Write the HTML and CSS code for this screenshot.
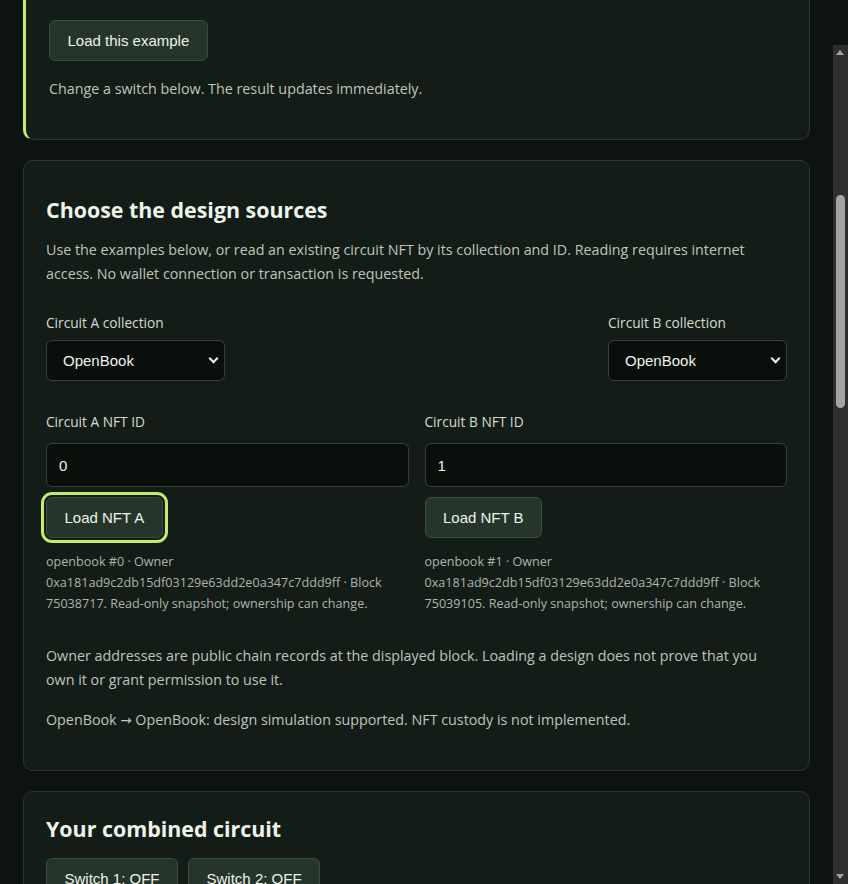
FILE: index.html
```html
<!DOCTYPE html>
<html lang="en">
<head>
<meta charset="utf-8">
<title>Circuit designer</title>
<link rel="stylesheet" href="styles.css">
</head>
<body>
<main class="page">
  <section class="card card--accent">
    <button class="btn" type="button">Load this example</button>
    <p class="text hint">Change a switch below. The result updates immediately.</p>
  </section>

  <section class="card card--sources">
    <h2 class="title title--sources">Choose the design sources</h2>
    <p class="text intro">Use the examples below, or read an existing circuit NFT by its collection and ID. Reading requires internet access. No wallet connection or transaction is requested.</p>

    <div class="collections">
      <div class="field">
        <label class="label" for="colA">Circuit A collection</label>
        <div class="select-wrap">
          <select id="colA" class="select"><option>OpenBook</option></select>
        </div>
      </div>
      <div class="field">
        <label class="label" for="colB">Circuit B collection</label>
        <div class="select-wrap">
          <select id="colB" class="select"><option>OpenBook</option></select>
        </div>
      </div>
    </div>

    <div class="nft-grid">
      <div class="nft-col">
        <label class="label" for="idA">Circuit A NFT ID</label>
        <input id="idA" class="input" type="text" value="0">
        <button class="btn btn--load btn--focus" type="button">Load NFT A</button>
        <p class="meta">openbook #0 · Owner 0xa181ad9c2db15df03129e63dd2e0a347c7ddd9ff · Block 75038717. Read-only snapshot; ownership can change.</p>
      </div>
      <div class="nft-col">
        <label class="label" for="idB">Circuit B NFT ID</label>
        <input id="idB" class="input" type="text" value="1">
        <button class="btn btn--load" type="button">Load NFT B</button>
        <p class="meta">openbook #1 · Owner 0xa181ad9c2db15df03129e63dd2e0a347c7ddd9ff · Block 75039105. Read-only snapshot; ownership can change.</p>
      </div>
    </div>

    <p class="text notice">Owner addresses are public chain records at the displayed block. Loading a design does not prove that you own it or grant permission to use it.</p>
    <p class="text">OpenBook <span class="arrow">→</span> OpenBook: design simulation supported. NFT custody is not implemented.</p>
  </section>

  <section class="card card--circuit">
    <h2 class="title title--circuit">Your combined circuit</h2>
    <div class="switches">
      <button class="btn" type="button">Switch 1: OFF</button>
      <button class="btn" type="button">Switch 2: OFF</button>
    </div>
  </section>
</main>

<div class="scrollbar" aria-hidden="true">
  <span class="scrollbar__up"></span>
  <span class="scrollbar__thumb"></span>
  <span class="scrollbar__down"></span>
</div>
</body>
</html>
```

FILE: styles.css
```css
* {
  box-sizing: border-box;
}

html {
  height: 100%;
  overflow: hidden;
}

body {
  margin: 0;
  height: 100%;
  overflow: hidden;
  background: #0d1310;
  color: #b9c4b7;
  font-family: "Open Sans", "Noto Sans", sans-serif;
}

.page {
  width: 787px;
  margin-left: 23px;
  display: flex;
  flex-direction: column;
  gap: 20px;
}

.card {
  background: #141c18;
  border: 1px solid #29372f;
  border-radius: 10px;
  padding: 22px;
}

.card--accent {
  border-top: 0;
  border-left: 3px solid #c6ea6b;
  border-radius: 0 0 10px 10px;
  padding: 20px 22px 22px 23px;
}

.title {
  margin: 0 0 14px;
  color: #eef4ea;
  font-size: 21.4px;
  font-weight: 700;
  line-height: 28px;
}

.title--sources {
  margin-top: 13px;
}

.title--circuit {
  margin-top: 1px;
  margin-bottom: 15px;
}

.text {
  margin: 0 0 16px;
  font-size: 14.3px;
  line-height: 24px;
  color: #bcc6ba;
}

.arrow {
  font-family: "DejaVu Sans", sans-serif;
  font-size: 13.5px;
  line-height: 0;
}

.hint {
  margin-top: 16px;
}

.intro {
  margin-bottom: 26px;
}

.notice {
  margin-top: 30px;
}

.btn {
  display: inline-block;
  font-family: "Liberation Sans", Arial, sans-serif;
  font-size: 15px;
  line-height: 17px;
  padding: 11px 17.5px;
  color: #edf2e8;
  background: #26352b;
  border: 1px solid #3a4b3f;
  border-radius: 6px;
}

.btn--focus {
  outline: 3px solid #c6ea6b;
  outline-offset: 2px;
}

.collections {
  display: flex;
  justify-content: space-between;
}

.field {
  display: flex;
  flex-direction: column;
  gap: 7px;
}

.label {
  display: block;
  font-size: 13.7px;
  line-height: 21px;
  color: #d4ddd0;
}

.select-wrap {
  position: relative;
  width: 179px;
}

.select-wrap::after {
  content: "";
  position: absolute;
  right: 8px;
  top: 15px;
  width: 5px;
  height: 5px;
  border-right: 2px solid #eceeea;
  border-bottom: 2px solid #eceeea;
  transform: rotate(45deg);
  pointer-events: none;
}

.select {
  appearance: none;
  -webkit-appearance: none;
  display: block;
  width: 100%;
  height: 41px;
  margin: 0;
  padding: 0 16px;
  font-family: "Liberation Sans", Arial, sans-serif;
  font-size: 15px;
  color: #eef2ea;
  background: #0a0f0c;
  border: 1px solid #34433a;
  border-radius: 6px;
}

.nft-grid {
  display: grid;
  grid-template-columns: 1fr 1fr;
  column-gap: 16px;
  margin-top: 30px;
}

.nft-col {
  display: flex;
  flex-direction: column;
  align-items: flex-start;
}

.nft-col .label {
  margin-bottom: 11px;
}

.input {
  display: block;
  width: 100%;
  height: 44px;
  margin: 0;
  padding: 0 12px;
  font-family: "Liberation Sans", Arial, sans-serif;
  font-size: 15px;
  color: #eef2ea;
  background: #0a0f0c;
  border: 1px solid #34433a;
  border-radius: 6px;
}

.btn--load {
  margin-top: 10px;
}

.meta {
  margin: 13px 0 0;
  font-size: 12.6px;
  line-height: 21px;
  color: #abb6a9;
}

.switches {
  display: flex;
  gap: 10px;
}

.scrollbar {
  position: fixed;
  top: 45px;
  right: 0;
  bottom: 0;
  width: 15px;
  background: #2e2f2e;
}

.scrollbar__up,
.scrollbar__down {
  position: absolute;
  left: 3px;
  width: 0;
  height: 0;
  border-left: 4.5px solid transparent;
  border-right: 4.5px solid transparent;
}

.scrollbar__up {
  top: 5px;
  border-bottom: 5px solid #a3a3a3;
}

.scrollbar__down {
  bottom: 5px;
  border-top: 5px solid #a3a3a3;
}

.scrollbar__thumb {
  position: absolute;
  top: 150px;
  left: 3px;
  width: 9px;
  height: 213px;
  border-radius: 5px;
  background: #a4a4a4;
}
```
